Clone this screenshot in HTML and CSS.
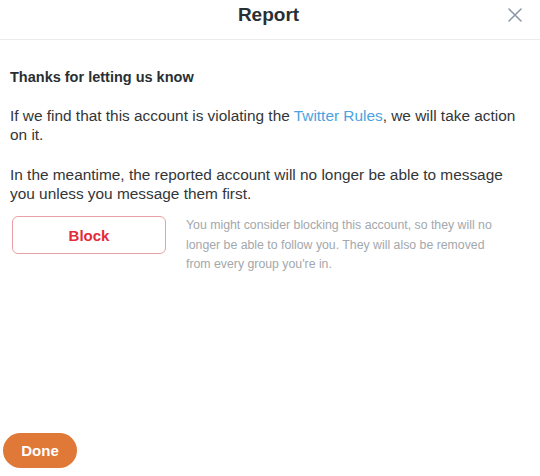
FILE: index.html
```html
<!DOCTYPE html>
<html>
<head>
<meta charset="utf-8">
<link rel="stylesheet" href="styles.css">
</head>
<body>
<div class="modal">
  <header class="header">
    <h1 class="title">Report</h1>
    <button class="close" aria-label="Close">
      <svg width="14" height="14" viewBox="0 0 14 14"><path d="M1 1 L13 13 M13 1 L1 13" stroke="#8a96a3" stroke-width="1.5" fill="none" stroke-linecap="round"/></svg>
    </button>
  </header>
  <main class="content">
    <h2 class="heading">Thanks for letting us know</h2>
    <p class="text">If we find that this account is violating the <a class="link" href="#">Twitter Rules</a>, we will take action on it.</p>
    <p class="text text-last">In the meantime, the reported account will no longer be able to message you unless you message them first.</p>
    <div class="block-row">
      <button class="block-btn">Block</button>
      <p class="note">You might consider blocking this account, so they will no longer be able to follow you. They will also be removed from every group you're in.</p>
    </div>
  </main>
  <footer class="footer">
    <button class="done">Done</button>
  </footer>
</div>
</body>
</html>
```
FILE: styles.css
```css
html, body {
  margin: 0;
  padding: 0;
  background: #fff;
}
body {
  font-family: "Liberation Sans", Arial, sans-serif;
  color: #292f33;
}
.modal {
  width: 540px;
  height: 476px;
  display: flex;
  flex-direction: column;
}
.header {
  height: 40px;
  border-bottom: 1px solid #e8ecee;
  display: flex;
  align-items: center;
  justify-content: center;
  position: relative;
  box-sizing: border-box;
}
.title {
  margin: 0;
  font-size: 19px;
  font-weight: bold;
  color: #292f33;
  padding-right: 3px;
  margin-top: -10px;
}
.close {
  position: absolute;
  right: 18px;
  top: 8px;
  border: 0;
  background: none;
  padding: 0;
  width: 14px;
  height: 14px;
  display: flex;
}
.content {
  padding: 28px 14px 0 10px;
  flex: 1;
}
.heading {
  margin: 0 0 21px 0;
  font-size: 14.5px;
  font-weight: bold;
  color: #292f33;
  line-height: 18px;
}
.text {
  margin: 0 0 22px 0;
  font-size: 15.4px;
  line-height: 18.5px;
  color: #333638;
}
.text-last {
  margin-bottom: 13px;
}
.link {
  color: #4aa3e0;
  text-decoration: none;
}
.block-row {
  display: flex;
  align-items: flex-start;
  gap: 20px;
}
.block-btn {
  margin-left: 2px;
  width: 154px;
  height: 38px;
  flex: none;
  border: 1px solid #e8a0a6;
  border-radius: 6px;
  background: #fff;
  color: #e22b3b;
  font-family: "Liberation Sans", Arial, sans-serif;
  font-weight: bold;
  font-size: 15px;
}
.note {
  margin: 0;
  font-size: 12.3px;
  line-height: 19.5px;
  color: #a3a8ac;
  width: 316px;
}
.footer {
  padding: 0 0 8px 3px;
}
.done {
  width: 74px;
  height: 35px;
  border: 0;
  border-radius: 18px;
  background: #e07837;
  color: #fff;
  font-family: "Liberation Sans", Arial, sans-serif;
  font-weight: bold;
  font-size: 15px;
}
```
